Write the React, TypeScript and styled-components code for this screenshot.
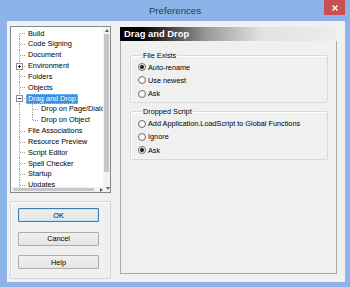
import styled, { createGlobalStyle } from 'styled-components';

const ROW_H = 10.85;

const GlobalStyle = createGlobalStyle`
  html, body {
    margin: 0;
    padding: 0;
    background: #8db4e9;
  }
  body {
    font-family: "Liberation Sans", Arial, sans-serif;
  }
`;

const Window = styled.div`
  width: 350px;
  height: 287px;
  background: #8db4e9;
  display: flex;
  flex-direction: column;
  overflow: hidden;
`;

const TitleBar = styled.div`
  height: 21px;
  flex: none;
  display: grid;
  grid-template-columns: 1fr auto 1fr;
  align-items: start;
`;

const Title = styled.div`
  grid-column: 2;
  font-size: 9.7px;
  line-height: 21px;
  color: #2e3a4a;
`;

const CloseButton = styled.div`
  grid-column: 3;
  justify-self: end;
  margin-right: 5px;
  width: 21px;
  height: 15px;
  background: #c75050;
  display: flex;
  align-items: center;
  justify-content: center;
`;

const Client = styled.div`
  flex: 1;
  margin: 0 5px 5px 7px;
  background: #f0f0f0;
  display: flex;
  gap: 9px;
  padding: 5px 8px 3px 3px;
  min-height: 0;
`;

const LeftColumn = styled.div`
  width: 101px;
  flex: none;
  display: flex;
  flex-direction: column;
  gap: 8px;
`;

const TreeBox = styled.div`
  height: 167px;
  flex: none;
  box-sizing: border-box;
  border: 1px solid #828790;
  background: #fff;
  display: grid;
  grid-template-columns: 1fr 7px;
  grid-template-rows: 1fr 5px;
  overflow: hidden;
`;

const TreeList = styled.div`
  padding-top: 1.1px;
  overflow: hidden;
  min-width: 0;
`;

const TreeRow = styled.div`
  display: flex;
  align-items: center;
  height: ${ROW_H}px;
  white-space: nowrap;
`;

const Gutter = styled.svg`
  flex: none;
  display: block;
`;

const TreeLabel = styled.span<{ $selected?: boolean }>`
  padding: 0 2px;
  font-size: 7.3px;
  line-height: 10px;
  height: 10px;
  color: ${(p) => (p.$selected ? '#fff' : '#000')};
  background: ${(p) => (p.$selected ? '#3d8ee0' : 'transparent')};
  outline: ${(p) => (p.$selected ? '1px dotted #9cc4ee' : 'none')};
  outline-offset: -1px;
`;

const VScroll = styled.div`
  background: #f2f2f2;
  display: flex;
  flex-direction: column;
  align-items: center;
`;

const HScroll = styled.div`
  background: #f2f2f2;
  display: flex;
  align-items: center;
  padding-left: 2px;
`;

const ArrowBox = styled.div<{ $size: number }>`
  width: ${(p) => p.$size}px;
  height: ${(p) => p.$size}px;
  flex: none;
  display: flex;
  align-items: center;
  justify-content: center;
`;

const VThumb = styled.div`
  width: 5px;
  height: 138px;
  background: #c6c6c6;
`;

const HThumb = styled.div`
  height: 3px;
  width: 81px;
  background: #c6c6c6;
  margin-right: auto;
`;

const Corner = styled.div`
  background: #f2f2f2;
  display: flex;
  align-items: flex-start;
  justify-content: flex-end;
`;

const ButtonGroup = styled.div`
  flex: 1;
  box-sizing: border-box;
  border: 1px solid #d5d5d5;
  box-shadow: inset 1px 1px 0 #fff;
  border-radius: 2px;
  padding: 6px 0 0 7px;
  display: flex;
  flex-direction: column;
  gap: 9.5px;
`;

const DialogButton = styled.button<{ $default?: boolean }>`
  width: 81px;
  height: 14px;
  box-sizing: border-box;
  padding: 0;
  border: 1px solid ${(p) => (p.$default ? '#3c7fb1' : '#acacac')};
  border-radius: 1px;
  background: linear-gradient(#f0f0f0, #e5e5e5);
  box-shadow: ${(p) => (p.$default ? 'inset 0 0 0 1px #c4e3f7' : 'none')};
  font-family: "Liberation Sans", Arial, sans-serif;
  font-size: 7.3px;
  color: #000;
`;

const RightPanel = styled.div`
  width: 217px;
  flex: none;
  margin: 1px 0 5px;
  display: flex;
  flex-direction: column;
`;

const PanelHeader = styled.div`
  height: 14px;
  flex: none;
  padding-left: 4px;
  background: linear-gradient(90deg, #000 0%, #000 10%, #9a9a9a 40%, #e2e2e2 65%, #ececec 100%);
  color: #fff;
  font-weight: bold;
  font-size: 9.4px;
  line-height: 14px;
`;

const PanelBody = styled.div`
  flex: 1;
  border: 1px solid #a8a8a8;
  border-top: none;
  padding: 9.5px 8px 0 9px;
`;

const Group = styled.fieldset<{ $gap?: number }>`
  margin: ${(p) => p.$gap ?? 0}px 0 0;
  padding: 1px 6px 2px 7px;
  border: 1px solid #d9d9d9;
  border-radius: 2px;
  box-shadow: inset 1px 1px 0 #fff;
  min-width: 0;
`;

const Legend = styled.legend`
  padding: 0 1px;
  margin-left: 4px;
  font-size: 7.3px;
  line-height: 9px;
  color: #000;
`;

const RadioRow = styled.label`
  display: flex;
  align-items: center;
  gap: 2px;
  height: 13.3px;
  font-size: 7.3px;
  color: #000;
  white-space: nowrap;
`;

const RadioCircle = styled.span<{ $checked?: boolean }>`
  width: 8px;
  height: 8px;
  flex: none;
  box-sizing: border-box;
  border-radius: 50%;
  border: 1px solid #707070;
  background: radial-gradient(circle, #fff 30%, #e4e4e4 100%);
  display: flex;
  align-items: center;
  justify-content: center;

  &::after {
    content: '';
    width: 4px;
    height: 4px;
    border-radius: 50%;
    background: ${(p) => (p.$checked ? '#141414' : 'transparent')};
  }
`;

type TreeItem = {
  label: string;
  level?: 1 | 2;
  expander?: 'plus' | 'minus';
  selected?: boolean;
  first?: boolean;
  lastChild?: boolean;
};

const treeItems: TreeItem[] = [
  { label: 'Build', first: true },
  { label: 'Code Signing' },
  { label: 'Document' },
  { label: 'Environment', expander: 'plus' },
  { label: 'Folders' },
  { label: 'Objects' },
  { label: 'Drag and Drop', expander: 'minus', selected: true },
  { label: 'Drop on Page/Dialog', level: 2 },
  { label: 'Drop on Object', level: 2, lastChild: true },
  { label: 'File Associations' },
  { label: 'Resource Preview' },
  { label: 'Script Editor' },
  { label: 'Spell Checker' },
  { label: 'Startup' },
  { label: 'Updates' },
];

const LINE = '#a0a0a0';

function TreeLines({ item }: { item: TreeItem }) {
  const child = item.level === 2;
  const w = child ? 28 : 15;
  const mid = 5.5;
  return (
    <Gutter width={w} height={ROW_H} shapeRendering="crispEdges">
      <line x1={8.5} y1={item.first ? mid : 0} x2={8.5} y2={ROW_H} stroke={LINE} strokeDasharray="1 1" />
      {child ? (
        <>
          <line x1={21.5} y1={0} x2={21.5} y2={item.lastChild ? mid : ROW_H} stroke={LINE} strokeDasharray="1 1" />
          <line x1={22} y1={mid} x2={28} y2={mid} stroke={LINE} strokeDasharray="1 1" />
        </>
      ) : (
        <line x1={9} y1={mid} x2={15} y2={mid} stroke={LINE} strokeDasharray="1 1" />
      )}
      {item.expander && (
        <>
          <rect x={5.5} y={mid - 3} width={6} height={6} fill="#fff" stroke="#8f8f8f" />
          <line x1={7} y1={mid} x2={10} y2={mid} stroke="#2a2a2a" />
          {item.expander === 'plus' && <line x1={8.5} y1={mid - 1.5} x2={8.5} y2={mid + 1.5} stroke="#2a2a2a" />}
        </>
      )}
    </Gutter>
  );
}

function Arrow({ dir }: { dir: 'up' | 'down' | 'left' | 'right' }) {
  const pts = {
    up: '0,3 2,0 4,3',
    down: '0,0 4,0 2,3',
    left: '3,0 3,4 0,2',
    right: '0,0 0,4 3,2',
  }[dir];
  const vertical = dir === 'up' || dir === 'down';
  return (
    <svg width={vertical ? 4 : 3} height={vertical ? 3 : 4}>
      <polygon points={pts} fill="#606060" />
    </svg>
  );
}

function App() {
  return (
    <Window>
      <GlobalStyle />
      <TitleBar>
        <Title>Preferences</Title>
        <CloseButton>
          <svg width="6" height="6" viewBox="0 0 6 6">
            <path d="M0.5 0.5 L5.5 5.5 M5.5 0.5 L0.5 5.5" stroke="#fff" strokeWidth="1.4" />
          </svg>
        </CloseButton>
      </TitleBar>
      <Client>
        <LeftColumn>
          <TreeBox>
            <TreeList>
              {treeItems.map((item) => (
                <TreeRow key={item.label}>
                  <TreeLines item={item} />
                  <TreeLabel $selected={item.selected}>{item.label}</TreeLabel>
                </TreeRow>
              ))}
            </TreeList>
            <VScroll>
              <ArrowBox $size={7}>
                <Arrow dir="up" />
              </ArrowBox>
              <VThumb />
            </VScroll>
            <HScroll>
              <HThumb />
              <Arrow dir="right" />
            </HScroll>
            <Corner>
              <Arrow dir="down" />
            </Corner>
          </TreeBox>
          <ButtonGroup>
            <DialogButton $default>OK</DialogButton>
            <DialogButton>Cancel</DialogButton>
            <DialogButton>Help</DialogButton>
          </ButtonGroup>
        </LeftColumn>
        <RightPanel>
          <PanelHeader>Drag and Drop</PanelHeader>
          <PanelBody>
            <Group>
              <Legend>File Exists</Legend>
              <RadioRow>
                <RadioCircle $checked />
                Auto-rename
              </RadioRow>
              <RadioRow>
                <RadioCircle />
                Use newest
              </RadioRow>
              <RadioRow>
                <RadioCircle />
                Ask
              </RadioRow>
            </Group>
            <Group $gap={3.5}>
              <Legend>Dropped Script</Legend>
              <RadioRow>
                <RadioCircle />
                Add Application.LoadScript to Global Functions
              </RadioRow>
              <RadioRow>
                <RadioCircle />
                Ignore
              </RadioRow>
              <RadioRow>
                <RadioCircle $checked />
                Ask
              </RadioRow>
            </Group>
          </PanelBody>
        </RightPanel>
      </Client>
    </Window>
  );
}

export default App;
